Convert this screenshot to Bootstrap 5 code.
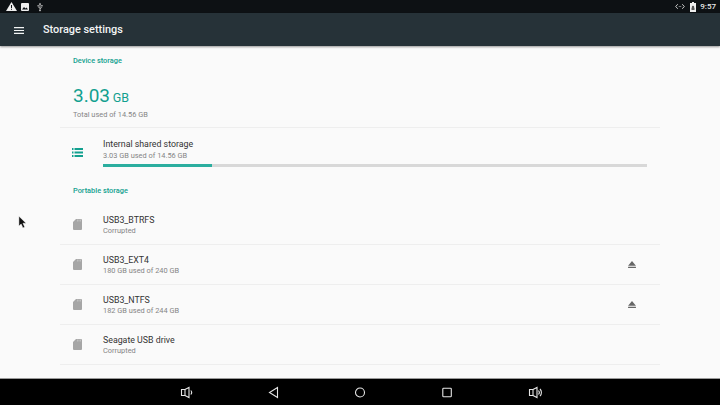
<!DOCTYPE html>
<html lang="en">
<head>
    <meta charset="UTF-8">
    <title>Storage settings</title>
    <link href="https://cdn.jsdelivr.net/npm/bootstrap@5.3.0/dist/css/bootstrap.min.css" rel="stylesheet">
    <style>
        html, body { height: 405px; overflow: hidden; }
        body { font-family: Roboto, "Liberation Sans", sans-serif; background: #fafafa; position: relative; }
        .status-strip { height: 13px; background: #0d1114; color: #e8eaea; padding: 0 4px 0 6px; }
        .status-strip .gap-left { margin-left: 4px; }
        .status-strip .gap-usb { margin-left: 8px; }
        .status-time { font-size: 8px; font-weight: 500; line-height: 13px; margin-left: 4px; }
        .status-lock { margin-left: 5px; }
        .app-toolbar { height: 33px; background: #263238; color: #f2f4f4; padding: 1px 0 0 14px; box-shadow: 0 1px 2px rgba(0,0,0,.4); position: relative; }
        .app-title { font-size: 10.9px; font-weight: 500; margin-left: 19px; }
        .page-body { height: 333px; padding: 0 60px; overflow: hidden; }
        .group-head { font-size: 7.4px; font-weight: 500; color: #12a08f; padding-left: 13px; line-height: 10px; }
        .head-first { padding-top: 10px; }
        .big-figure { color: #12a08f; font-size: 19px; line-height: 24px; padding: 18px 0 0 13px; word-spacing: -2px; }
        .big-figure span { font-size: 12.5px; }
        .big-caption { font-size: 7.4px; color: #858585; padding-left: 13px; line-height: 10px; padding-bottom: 7px; border-bottom: 1px solid #eeeeee; }
        .store-row { height: 40px; border-bottom: 1px solid #eeeeee; padding: 0 24px 0 13px; }
        .store-main { height: 49px; padding: 0 13px 0 12px; }
        .row-glyph { width: 30px; flex: none; }
        .store-main .row-glyph { width: 31px; }
        .row-name { font-size: 8.8px; line-height: 12px; color: #333333; }
        .row-sub { font-size: 7.4px; line-height: 10px; color: #858585; }
        .store-main .row-sub { margin-top: 1px; }
        .use-track { height: 3px; background: #d8d8d8; margin-top: 3px; }
        .use-fill { height: 3px; background: #2bae9f; }
        .portable-head { padding-top: 9px; padding-bottom: 9px; }
        .nav-strip { height: 26px; background: #000; box-shadow: 0 -1px 0 #9a9a9a; position: relative; padding-left: 180px; gap: 75px; }
        .mouse-arrow { position: absolute; left: 18px; top: 216px; }
    </style>
</head>
<body>
    <div class="status-strip d-flex align-items-center">
        <svg width="11" height="9" viewBox="0 0 11 9"><path d="M5.500 0 11 9H0z" fill="#eee"/><path d="M5 3h1v3H5zM5 6.800h1v1H5z" fill="#0d1114"/></svg>
        <svg class="gap-left" width="8" height="8" viewBox="0 0 8 8"><rect width="8" height="8" rx="1" fill="#eee"/><path d="M1 6.500 3 4l1.500 1.500L5.500 4.500 7 6.500z" fill="#0d1114"/></svg>
        <svg class="gap-usb" width="6" height="10" viewBox="0 0 7 10"><path d="M3.500 0 5 2H4v4.500L5.500 5V4H5V2.800h1.500V4H6v1.300L4 7.200v.9a1 1 0 1 1-1 0V6.600L1 5V4.300a.8.8 0 1 1 .6 0v.5L3 6V2H2z" fill="#ccc"/></svg>
        <svg class="ms-auto" width="10" height="7" viewBox="0 0 11 7" fill="none" stroke="#ddd" stroke-width="1"><path d="M3 1 .8 3.500 3 6M8 1l2.200 2.500L8 6"/><path d="M4.200 3.500h.8M6 3.500h.8"/></svg>
        <svg class="status-lock" width="6" height="10" viewBox="0 0 6 10"><path d="M2 0h2v1h2v9H0V1h2z" fill="#eee"/><path d="M1.800 6V5a1.200 1.200 0 0 1 2.400 0v1h.3v2h-3V6z" fill="#555"/></svg>
        <span class="status-time">9:57</span>
    </div>
    <div class="app-toolbar d-flex align-items-center">
        <svg width="10" height="7" viewBox="0 0 10 7" fill="#f2f4f4"><path d="M0 0h10v1.200H0zM0 2.900h10v1.200H0zM0 5.800h10V7H0z"/></svg>
        <span class="app-title">Storage settings</span>
    </div>

    <div class="page-body">
        <div class="group-head head-first">Device storage</div>
        <div class="big-figure">3.03 <span>GB</span></div>
        <div class="big-caption">Total used of 14.56 GB</div>

        <div class="store-main d-flex align-items-center">
            <div class="row-glyph">
                <svg class="d-block" width="11" height="9" viewBox="0 0 11 9" fill="#12a08f"><path d="M0 0h1.500v2H0zM2.500 0H11v2H2.500zM0 3.500h1.500v2H0zM2.500 3.500H11v2H2.500zM0 7h1.500v2H0zM2.500 7H11v2H2.500z"/></svg>
            </div>
            <div class="flex-grow-1">
                <div class="row-name">Internal shared storage</div>
                <div class="row-sub">3.03 GB used of 14.56 GB</div>
                <div class="use-track"><div class="use-fill" style="width: 20%"></div></div>
            </div>
        </div>

        <div class="group-head portable-head">Portable storage</div>

        <div class="store-row d-flex align-items-center">
            <div class="row-glyph"><svg class="d-block" width="9" height="11" viewBox="0 0 9 11"><path d="M3 0h5a1 1 0 0 1 1 1v9a1 1 0 0 1-1 1H1a1 1 0 0 1-1-1V3z" fill="#a6a6a6"/><path d="M4.500 .5v2M6 .5v2M7.500 .5v2" stroke="#d8d8d8" stroke-width=".5"/></svg></div>
            <div class="flex-grow-1"><div class="row-name">USB3_BTRFS</div><div class="row-sub">Corrupted</div></div>
        </div>
        <div class="store-row d-flex align-items-center">
            <div class="row-glyph"><svg class="d-block" width="9" height="11" viewBox="0 0 9 11"><path d="M3 0h5a1 1 0 0 1 1 1v9a1 1 0 0 1-1 1H1a1 1 0 0 1-1-1V3z" fill="#a6a6a6"/><path d="M4.500 .5v2M6 .5v2M7.500 .5v2" stroke="#d8d8d8" stroke-width=".5"/></svg></div>
            <div class="flex-grow-1"><div class="row-name">USB3_EXT4</div><div class="row-sub">180 GB used of 240 GB</div></div>
            <svg width="8" height="7" viewBox="0 0 9 8" fill="#666"><path d="M4.500 0 9 5.500H0zM0 6.700h9V8H0z"/></svg>
        </div>
        <div class="store-row d-flex align-items-center">
            <div class="row-glyph"><svg class="d-block" width="9" height="11" viewBox="0 0 9 11"><path d="M3 0h5a1 1 0 0 1 1 1v9a1 1 0 0 1-1 1H1a1 1 0 0 1-1-1V3z" fill="#a6a6a6"/><path d="M4.500 .5v2M6 .5v2M7.500 .5v2" stroke="#d8d8d8" stroke-width=".5"/></svg></div>
            <div class="flex-grow-1"><div class="row-name">USB3_NTFS</div><div class="row-sub">182 GB used of 244 GB</div></div>
            <svg width="8" height="7" viewBox="0 0 9 8" fill="#666"><path d="M4.500 0 9 5.500H0zM0 6.700h9V8H0z"/></svg>
        </div>
        <div class="store-row d-flex align-items-center">
            <div class="row-glyph"><svg class="d-block" width="9" height="11" viewBox="0 0 9 11"><path d="M3 0h5a1 1 0 0 1 1 1v9a1 1 0 0 1-1 1H1a1 1 0 0 1-1-1V3z" fill="#a6a6a6"/><path d="M4.500 .5v2M6 .5v2M7.500 .5v2" stroke="#d8d8d8" stroke-width=".5"/></svg></div>
            <div class="flex-grow-1"><div class="row-name">Seagate USB drive</div><div class="row-sub">Corrupted</div></div>
        </div>
    </div>

    <div class="nav-strip d-flex align-items-center">
        <svg width="13" height="13" viewBox="0 0 13 13" fill="none" stroke="#e6e6e6" stroke-width="1.100"><path d="M1.500 3.500h3.500L9 1.500v10L5 9.500H1.500z"/><path d="M5 3.500v6"/><path d="M10.800 4.500a3 3 0 0 1 0 4"/></svg>
        <svg width="11" height="13" viewBox="0 0 11 13" fill="none" stroke="#e6e6e6" stroke-width="1.100"><path d="M9.500 1.500v10L1.500 6.500z"/></svg>
        <svg width="12" height="13" viewBox="0 0 12 13" fill="none" stroke="#e6e6e6" stroke-width="1.100"><circle cx="6" cy="6.500" r="4.500"/></svg>
        <svg width="12" height="13" viewBox="0 0 12 13" fill="none" stroke="#e6e6e6" stroke-width="1.100"><rect x="1.800" y="2.300" width="8.500" height="8.500" rx=".8"/></svg>
        <svg width="14" height="13" viewBox="0 0 14 13" fill="none" stroke="#e6e6e6" stroke-width="1.100"><path d="M1.500 3.500h3.500L9 1.500v10L5 9.500H1.500z"/><path d="M5 3.500v6"/><path d="M10.500 4.500a3 3 0 0 1 0 4M12 3a5 5 0 0 1 0 7"/></svg>
    </div>

    <svg class="mouse-arrow" width="9" height="13" viewBox="0 0 10 14"><path d="M1 0v11l2.500-2.300L5.500 13l2-1-2-4.200H9z" fill="#111" stroke="#fff" stroke-width=".5"/></svg>
</body>
</html>
